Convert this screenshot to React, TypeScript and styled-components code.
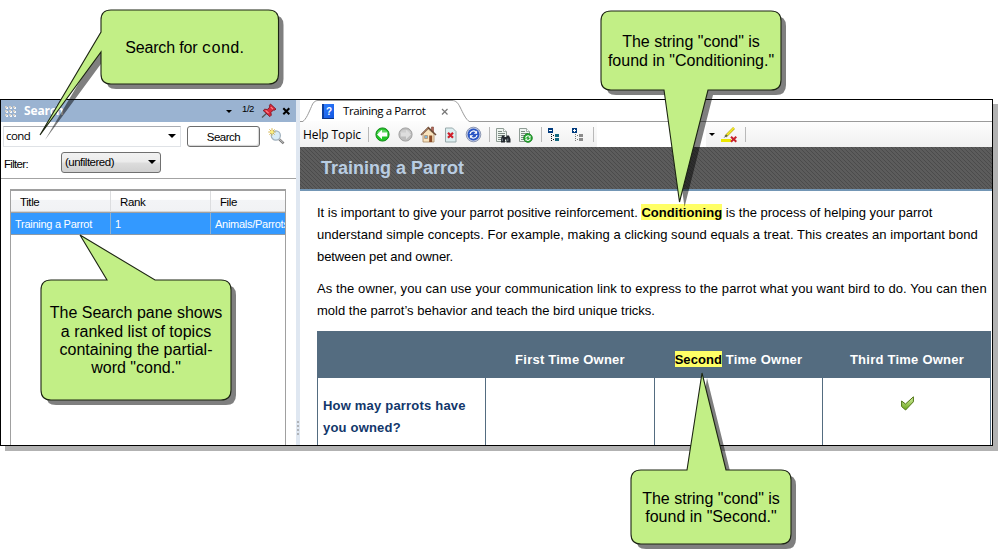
import React from "react";
import styled, { createGlobalStyle } from "styled-components";

const GlobalStyle = createGlobalStyle`
  *, *::before, *::after { box-sizing: border-box; }
  body { margin: 0; background: #fff; overflow: hidden; }
`;

const SANS = `"Liberation Sans", Arial, sans-serif`;
const UI = `"Open Sans", "Noto Sans", sans-serif`;

const Page = styled.main`
  position: relative;
  width: 998px;
  height: 559px;
  padding-top: 99px;
  overflow: hidden;
  background: #fff;
  font-family: ${SANS};
  color: #000;
`;

const AppWindow = styled.div`
  display: grid;
  grid-template-columns: 295px 4px 1fr;
  width: 993px;
  height: 347px;
  border: 1px solid #000;
  background: #fff;
  box-shadow: 5px 5px 0 #b2b2b2;
`;

/* ---------- Search pane ---------- */

const SearchPane = styled.section`
  display: flex;
  flex-direction: column;
  min-width: 0;
  overflow: hidden;
  font-size: 11px;
  letter-spacing: -0.27px;
`;

const PaneHeader = styled.header`
  display: flex;
  align-items: center;
  flex: none;
  height: 22px;
  padding: 0 5px 0 4px;
  background: #9ab3d1;
`;

const PaneTitle = styled.h2`
  flex: 1;
  margin: 0 0 0 8px;
  font: bold 12px/22px ${UI};
  letter-spacing: -0.15px;
  color: #fff;
`;

const HeaderTools = styled.div`
  display: flex;
  align-items: center;
`;

const SearchRow = styled.div`
  display: flex;
  align-items: center;
  flex: none;
  height: 29px;
  padding: 0 10px 0 2px;
`;

const QueryBox = styled.div`
  display: flex;
  align-items: center;
  justify-content: space-between;
  width: 178px;
  height: 21px;
  padding: 0 4px 2px 2px;
  border: 1px solid #dfe2e6;
  border-top-color: #a9acb2;
  font: 11.5px/18px ${UI};
  letter-spacing: -0.6px;
`;

const SearchButton = styled.button`
  width: 73px;
  height: 21px;
  margin: 0 8px 0 6px;
  padding: 0;
  border: 1px solid #6d6d6d;
  border-radius: 3px;
  background: #fff;
  box-shadow: inset -1px -1px 1px #d4d4d4;
  font: 11.5px/18px ${SANS};
  letter-spacing: -0.5px;
  color: #000;
`;

const FilterRow = styled.div`
  display: flex;
  align-items: center;
  flex: none;
  height: 28px;
  padding: 0 0 5px 3px;
  border-bottom: 1px solid #a3a3a3;
`;

const FilterLabel = styled.label`
  width: 57px;
  padding-top: 3px;
  font-size: 11.5px;
  letter-spacing: -0.68px;
`;

const FilterSelect = styled.div`
  display: flex;
  align-items: center;
  justify-content: space-between;
  width: 100px;
  height: 21px;
  padding: 0 4px 0 3px;
  border: 1px solid #707070;
  border-radius: 3px;
  background: linear-gradient(#f2f2f2, #ebebeb 48%, #dddddd 52%, #d0d0d0);
  font-size: 11.5px;
  letter-spacing: -0.5px;
`;

const ResultList = styled.div`
  flex: 1;
  width: 276px;
  margin: 10px 0 0 9px;
  border: 1px solid #a0a0a0;
  border-bottom: 0;
  border-top-width: 2px;
  overflow: hidden;
`;

const ResultRow = styled.div<{ $head?: boolean }>`
  display: grid;
  grid-template-columns: 100px 100px 74px;
  height: 22px;
  background: ${(p) => (p.$head ? "linear-gradient(#fff 40%, #f3f4f6 44%, #f1f2f4)" : "#3399ff")};
  color: ${(p) => (p.$head ? "#000" : "#fff")};
  border-bottom: 1px solid ${(p) => (p.$head ? "#a0a0a0" : "#8c9aa8")};
  box-shadow: ${(p) => (p.$head ? "inset 0 -1px 0 #d5d5d5" : "none")};
`;

const ResultCell = styled.span<{ $head?: boolean }>`
  padding-left: ${(p) => (p.$head ? 9 : 4)}px;
  font-size: ${(p) => (p.$head ? 11.5 : 11)}px;
  letter-spacing: ${(p) => (p.$head ? -0.4 : -0.27)}px;
  line-height: 22px;
  white-space: nowrap;
  overflow: hidden;
  border-right: ${(p) => (p.$head ? "1px solid #dcdddf" : "1px solid #8fb0d0")};
  &:last-child { border-right: 0; }
`;

/* ---------- Splitter ---------- */

const Splitter = styled.div`
  display: flex;
  flex-direction: column;
  justify-content: flex-end;
  align-items: center;
  gap: 2px;
  padding-bottom: 10px;
  background: #dfe7f1;
`;

const SplitterDot = styled.i`
  width: 2px;
  height: 2px;
  background: #b0b3b8;
`;

/* ---------- Topic pane ---------- */

const TopicPane = styled.section`
  display: flex;
  flex-direction: column;
  min-width: 0;
  overflow: hidden;
`;

const TabStrip = styled.div`
  display: flex;
  flex: none;
  height: 22px;
  background: linear-gradient(#9a9a9a, #9a9a9a) 0 21px / 100% 1px no-repeat;
`;

const Tab = styled.div`
  position: relative;
  display: flex;
  align-items: center;
  width: 172px;
  height: 22px;
  padding-left: 21px;
  font: 11.5px/20px ${UI};
`;

const TabShape = styled.svg`
  position: absolute;
  inset: 0;
`;

const TabLabel = styled.span`
  position: relative;
  width: 101px;
  margin-left: 9px;
  letter-spacing: -0.43px;
  white-space: nowrap;
`;

const Toolbar = styled.div`
  display: flex;
  align-items: center;
  flex: none;
  height: 25px;
  background: linear-gradient(#fdfdfd, #f0f0f0);
`;

const ToolbarLabel = styled.span`
  width: 65px;
  padding-left: 3px;
  font: 12px/24px ${UI};
  letter-spacing: -0.1px;
  white-space: nowrap;
`;

const ToolSlot = styled.span<{ $w: number }>`
  display: flex;
  flex: none;
  justify-content: center;
  width: ${(p) => p.$w}px;
`;

const ToolSeparator = styled.i`
  flex: none;
  width: 1px;
  height: 15px;
  background: #b9b9b9;
`;

const ToolCombo = styled.div`
  flex: none;
  width: 109px;
  height: 25px;
  margin-left: 3px;
  background: #fff;
`;

const Banner = styled.h1`
  flex: none;
  height: 44px;
  margin: 0;
  padding-left: 21px;
  border-bottom: 2px solid #7396b5;
  background: repeating-linear-gradient(45deg, #4b4b4b 0 1px, #5c5c5c 1px 2.83px);
  font: bold 18px/42px ${SANS};
  color: #b9cde2;
`;

const Article = styled.article`
  flex: 1;
  padding: 11px 0 0 17px;
  min-height: 0;
  overflow: hidden;
  font-size: 13px;
  line-height: 22px;
`;

const Paragraph = styled.p`
  margin: 0 0 10px;
`;

const Line = styled.span<{ $ls?: number }>`
  display: block;
  white-space: nowrap;
  letter-spacing: ${(p) => p.$ls ?? 0}px;
`;

const Hit = styled.mark`
  padding: 1px 0 0;
  background: #ffff66;
  color: #000;
  font-weight: bold;
  letter-spacing: 0.05px;
`;

const OwnersTable = styled.div`
  display: grid;
  grid-template-columns: 168px 169px 168px 169px;
  width: 674px;
  margin-top: -1px;
  border-right: 1px solid #546c80;
`;

const HeadCell = styled.div`
  height: 47px;
  padding: 18px 0 0 1px;
  background: #546c80;
  color: #fff;
  font-weight: bold;
  letter-spacing: 0.24px;
  text-align: center;
  white-space: nowrap;
`;

const BodyCell = styled.div`
  height: 90px;
  padding: 17px 0 0 5px;
  border-left: 1px solid #546c80;
  color: #12376b;
  font-weight: bold;
`;

const CheckSlot = styled.div`
  display: flex;
  justify-content: center;
  padding: 1px 5px 0 0;
`;

/* ---------- Callouts floating over the window ---------- */

const CalloutLayer = styled.svg`
  position: absolute;
  inset: 0;
`;

const CalloutText = styled.div<{ $x: number; $y: number; $w: number; $h: number }>`
  position: absolute;
  left: ${(p) => p.$x}px;
  top: ${(p) => p.$y}px;
  width: ${(p) => p.$w}px;
  height: ${(p) => p.$h}px;
  display: flex;
  flex-direction: column;
  align-items: center;
  justify-content: center;
  font: 16px/18.4px ${SANS};
  white-space: nowrap;
`;

const Code = styled.code`
  font: 16px "Liberation Mono", monospace;
`;

type Tail = { from: [number, number]; tip: [number, number]; to: [number, number]; side: "left" | "top" | "bottom" };

function calloutPath(x: number, y: number, w: number, h: number, tail?: Tail) {
  const r = 10;
  const seg = (side: Tail["side"]) =>
    tail && tail.side === side ? `L${tail.from.join(" ")} L${tail.tip.join(" ")} L${tail.to.join(" ")} ` : "";
  return (
    `M${x + r} ${y} ${seg("top")}H${x + w - r} Q${x + w} ${y} ${x + w} ${y + r} ` +
    `V${y + h - r} Q${x + w} ${y + h} ${x + w - r} ${y + h} ${seg("bottom")}` +
    `H${x + r} Q${x} ${y + h} ${x} ${y + h - r} ${seg("left")}V${y + r} Q${x} ${y} ${x + r} ${y}Z`
  );
}

type CalloutProps = { x: number; y: number; w: number; h: number; tail: Tail; flatShadow?: boolean };

function Callout({ x, y, w, h, tail, flatShadow }: CalloutProps) {
  const shape = calloutPath(x, y, w, h, tail);
  return (
    <g>
      <path d={flatShadow ? calloutPath(x, y, w, h) : shape} transform="translate(5 5)" fill="#000" fillOpacity=".5" />
      <path d={shape} fill="#c2ef86" stroke="#1c2412" strokeWidth="1.1" />
    </g>
  );
}

/* ---------- Icons ---------- */

const Caret = ({ small }: { small?: boolean }) =>
  small ? (
    <svg width="6" height="3" viewBox="0 0 6 3"><path d="M0 0h6L3 3z" fill="#000" /></svg>
  ) : (
    <svg width="8" height="4" viewBox="0 0 8 4"><path d="M0 0h8L4 4z" fill="#000" /></svg>
  );

const Grip = () => (
  <svg width="11" height="11" viewBox="0 0 11 11">
    {[0, 4, 8].map((y) => [0, 4, 8].map((x) => (
      <g key={`${x}-${y}`}><rect x={x + 1} y={y + 1} width="2" height="2" fill="#f6f8fb" /><rect x={x} y={y} width="2" height="2" fill="#d3cfc8" /></g>
    )))}
  </svg>
);

const Half = styled.span`
  width: 13px;
  margin: -4px 6px 0 10px;
  font: 9.5px/12px ${SANS};
  letter-spacing: -0.4px;
  white-space: nowrap;
`;

const PinIcon = () => (
  <svg width="16" height="16" viewBox="0 0 16 16">
    <path d="M6 10 1 14.5" stroke="#555" strokeWidth="1.3" />
    <path d="M9.5 1 15 6.200l-1.600 1-1-.2-2.500 2.500.4 2.700-1.400 1.400L2.200 7.600l1.500-1.400 2.700.3 2.400-2.400-.4-1.600z" fill="#d8283a" stroke="#7d1523" strokeWidth=".9" />
    <path d="m9.8 4.1 2.2 2M4.6 7.400l3 2.800" stroke="#ff8c91" strokeWidth="1.1" />
  </svg>
);

const CloseIcon = () => (
  <svg width="9" height="9" viewBox="0 0 9 9"><path d="M1.3 1.3l6 6m0-6l-6 6" stroke="#000" strokeWidth="2" /></svg>
);

const MagnifierIcon = () => (
  <svg width="17" height="17" viewBox="0 0 17 17">
    <path d="m10.8 10.8 4.8 4.6" stroke="#777" strokeWidth="2.4" />
    <path d="m11 10.8 4.2 4" stroke="#ccc" strokeWidth="1" />
    <circle cx="7.8" cy="7.5" r="4.6" fill="#d8ecf7" stroke="#9fb0bd" strokeWidth="1.2" />
    <path d="M4 .2v7.4M.3 4h7.4M1.4 1.4l5.2 5.2M6.6 1.4 1.4 6.6" stroke="#c9a11e" strokeWidth=".8" />
    <circle cx="4" cy="4" r="1.6" fill="#fff27a" />
  </svg>
);

const BookIcon = styled.span`
  position: relative;
  display: grid;
  place-items: center;
  width: 12px;
  height: 15px;
  margin-left: 1px;
  border-left: 2px solid #0d3f9e;
  border-bottom: 1px solid #0b3484;
  background: linear-gradient(135deg, #2f7dff, #1257e0);
  color: #fff;
  font: bold 10px/15px ${SANS};
`;

const ArrowBall = ({ forward }: { forward?: boolean }) => (
  <svg width="15" height="15" viewBox="0 0 15 15">
    <g transform={forward ? "translate(15 0) scale(-1 1)" : undefined}>
      <circle cx="7.5" cy="7.5" r="6.6" fill={forward ? "#bdbdbd" : "#1fc424"} stroke={forward ? "#a2a2a2" : "#148a1b"} />
      <path d="M2 6a5.8 4.8 0 0 1 11 0z" fill="#fff" fillOpacity=".28" />
      <path d="M2 7.5 7 2.8v2.7h5.3v4H7v2.7z" fill={forward ? "#dedede" : "#fff"} />
    </g>
  </svg>
);

const HomeIcon = () => (
  <svg width="17" height="17" viewBox="0 0 17 17">
    <path d="M11.5 1h2v5h-2z" fill="#b5655a" stroke="#7d4a3b" strokeWidth=".6" />
    <path d="M3 8 8.3 3 14 8v8H3z" fill="#f8e3bd" stroke="#a58763" strokeWidth=".8" />
    <path d="M1 9 8.3 1.6 16 9" fill="none" stroke="#6b4a36" strokeWidth="1.5" />
    <path d="M1.6 8.4 8.3 1.8" stroke="#c08f6c" strokeWidth=".7" />
    <path d="M9.2 9.5h3V16h-3z" fill="#8a4a26" />
    <path d="M4.6 9.5h2.9v3H4.6z" fill="#7db6de" stroke="#a87c55" strokeWidth=".6" />
  </svg>
);

const PageBase = () => (
  <>
    <path d="M1.5 1.5h7l3 3v10h-10z" fill="#eef5f0" stroke="#8f9c95" />
    <path d="M8.5 1.5v3h3" fill="#fff" stroke="#8f9c95" strokeWidth=".8" />
    <path d="M3 4.5h4M3 6.5h7M3 8.5h7M3 10.5h5M3 12.5h4" stroke="#7c8b83" />
  </>
);

const StopPageIcon = () => (
  <svg width="13" height="16" viewBox="0 0 13 16">
    <path d="M1.5 1h7L12 4.5V15H1.5z" fill="#dceef0" stroke="#98a9ab" />
    <path d="m4 5.8 5 5m0-5-5 5" stroke="#d0202c" strokeWidth="2.2" />
  </svg>
);

const RefreshIcon = () => (
  <svg width="17" height="17" viewBox="0 0 17 17">
    <circle cx="8.5" cy="8.5" r="7.3" fill="#bfc8e0" stroke="#8d98b4" />
    <circle cx="8.5" cy="8.5" r="5.9" fill="#2955c4" />
    <path d="M5 8a3.6 3.4 0 0 1 5.8-2.3M12 9a3.6 3.4 0 0 1-5.8 2.3" fill="none" stroke="#fff" strokeWidth="1.2" />
    <path d="M12.1 4.4v3.4H8.7zM4.9 12.6V9.2h3.4z" fill="#fff" />
  </svg>
);

const FindPageIcon = () => (
  <svg width="16" height="16" viewBox="0 0 16 16">
    <PageBase />
    <path d="M7 8.5h2.5V10h2V8.5H14l1.5 3.5v3.5h-4v-3H10v3H6V12z" fill="#252a30" />
    <path d="M7.3 11.5V14M12.8 11.5V14" stroke="#7b8691" />
  </svg>
);

const SyncPageIcon = () => (
  <svg width="15" height="16" viewBox="0 0 15 16">
    <PageBase />
    <circle cx="10" cy="11" r="4.4" fill="#21a52c" stroke="#14791d" strokeWidth=".7" />
    <path d="M7.7 10.8a2.3 2.3 0 0 1 4-1.2M12.3 11.4a2.3 2.3 0 0 1-4 1.2" fill="none" stroke="#fff" strokeWidth="1.1" />
    <path d="M12.6 8.4v2.3h-2.3zM7.4 13.7v-2.3h2.3z" fill="#fff" />
  </svg>
);

const TreeIcon = ({ expand }: { expand?: boolean }) => {
  const block = expand ? "#8a8a8a" : "#13687f";
  return (
    <svg width="12" height="14" viewBox="0 0 12 14" shapeRendering="crispEdges">
      <rect width="5" height="5" fill="#003a7d" />
      <path d="M1 2.5h3" stroke="#fff" />
      {expand && <path d="M2.5 1v3" stroke="#fff" />}
      <path d="M3.5 6v7M5 7.5h2M5 11.5h2" stroke={expand ? "#777" : "#111"} strokeDasharray="1 1" />
      <rect x="7" y="6" width="4" height="3" fill={block} />
      <rect x="7" y="10" width="4" height="3" fill={block} />
    </svg>
  );
};

const HighlighterIcon = () => (
  <svg width="17" height="16" viewBox="0 0 17 16">
    <path d="M0 12h10v3H0z" fill="#ece800" />
    <path d="M4.5 9.5 13 1" stroke="#b6a61a" strokeWidth="2.6" />
    <path d="m5.5 8.5 7.5-7.7" stroke="#f5ed28" strokeWidth="1.6" />
    <path d="m2.5 11 2.8-3.5 1.5 1.3z" fill="#4f5964" />
    <path d="m10 9.7 5.3 5m0-5-5.3 5" stroke="#c8222c" strokeWidth="2" />
  </svg>
);

const CheckIcon = () => (
  <svg width="13" height="15" viewBox="0 0 13 15">
    <defs>
      <linearGradient id="leaf" x1="0" y1="0" x2="0" y2="1"><stop stopColor="#d7f3a4" /><stop offset="1" stopColor="#6ba51a" /></linearGradient>
    </defs>
    <path d="M.6 5 4.5 8 12.4.8v5L4.6 14l-4-3.5z" fill="url(#leaf)" stroke="#4f7315" />
  </svg>
);

const TAB_OUTLINE = "M2.5 21.5C6 20 9 12 11.5 6.5 13 2.5 15 .5 18 .5H152c4 0 6 2.5 8 6.5 3 6 6 13 9.5 14.5";

export default function App() {
  return (
    <>
      <GlobalStyle />
      <Page>
        <AppWindow>
          <SearchPane>
            <PaneHeader>
              <Grip />
              <PaneTitle>Search</PaneTitle>
              <HeaderTools>
                <Caret small />
                <Half>1/2</Half>
                <PinIcon />
                <ToolSlot $w={5} />
                <CloseIcon />
              </HeaderTools>
            </PaneHeader>
            <SearchRow>
              <QueryBox>cond<Caret /></QueryBox>
              <SearchButton>Search</SearchButton>
              <MagnifierIcon />
            </SearchRow>
            <FilterRow>
              <FilterLabel>Filter:</FilterLabel>
              <FilterSelect>(unfiltered)<Caret /></FilterSelect>
            </FilterRow>
            <ResultList>
              <ResultRow $head>
                <ResultCell $head>Title</ResultCell>
                <ResultCell $head>Rank</ResultCell>
                <ResultCell $head>File</ResultCell>
              </ResultRow>
              <ResultRow>
                <ResultCell>Training a Parrot</ResultCell>
                <ResultCell>1</ResultCell>
                <ResultCell>Animals/Parrots</ResultCell>
              </ResultRow>
            </ResultList>
          </SearchPane>

          <Splitter>
            {[0, 1, 2, 3].map((i) => <SplitterDot key={i} />)}
          </Splitter>

          <TopicPane>
            <TabStrip>
              <Tab>
                <TabShape width="172" height="22" viewBox="0 0 172 22">
                  <path d={TAB_OUTLINE} fill="#fff" stroke="#999" />
                  <path d="M3.5 21.5h165" stroke="#fdfdfd" />
                </TabShape>
                <BookIcon>?</BookIcon>
                <TabLabel>Training a Parrot</TabLabel>
                <TabShape width="172" height="22" viewBox="0 0 172 22">
                  <path d="m142 9 5.5 5.5m0-5.5L142 14.5" stroke="#777" strokeWidth="1.2" />
                </TabShape>
              </Tab>
            </TabStrip>
            <Toolbar>
              <ToolbarLabel>Help Topic</ToolbarLabel>
              <ToolSlot $w={3} />
              <ToolSeparator />
              <ToolSlot $w={26}><ArrowBall /></ToolSlot>
              <ToolSlot $w={20}><ArrowBall forward /></ToolSlot>
              <ToolSlot $w={26}><HomeIcon /></ToolSlot>
              <ToolSlot $w={19}><StopPageIcon /></ToolSlot>
              <ToolSlot $w={27}><RefreshIcon /></ToolSlot>
              <ToolSlot $w={2} />
              <ToolSeparator />
              <ToolSlot $w={26}><FindPageIcon /></ToolSlot>
              <ToolSlot $w={19}><SyncPageIcon /></ToolSlot>
              <ToolSlot $w={6} />
              <ToolSeparator />
              <ToolSlot $w={24}><TreeIcon /></ToolSlot>
              <ToolSlot $w={23}><TreeIcon expand /></ToolSlot>
              <ToolSlot $w={4} />
              <ToolSeparator />
              <ToolCombo />
              <ToolSlot $w={12}><Caret small /></ToolSlot>
              <ToolSlot $w={23}><HighlighterIcon /></ToolSlot>
              <ToolSlot $w={4} />
              <ToolSeparator />
            </Toolbar>
            <Banner>Training a Parrot</Banner>
            <Article>
              <Paragraph>
                <Line>It is important to give your parrot positive reinforcement. <Hit>Conditioning</Hit> is the process of helping your parrot</Line>
                <Line $ls={0.05}>understand simple concepts. For example, making a clicking sound equals a treat. This creates an important bond</Line>
                <Line $ls={-0.09}>between pet and owner.</Line>
              </Paragraph>
              <Paragraph>
                <Line $ls={0.088}>As the owner, you can use your communication link to express to the parrot what you want bird to do. You can then</Line>
                <Line>mold the parrot’s behavior and teach the bird unique tricks.</Line>
              </Paragraph>
              <OwnersTable>
                <HeadCell />
                <HeadCell>First Time Owner</HeadCell>
                <HeadCell><Hit>Second</Hit> Time Owner</HeadCell>
                <HeadCell>Third Time Owner</HeadCell>
                <BodyCell>
                  <Line $ls={0.2}>How may parrots have</Line>
                  <Line $ls={0.2}>you owned?</Line>
                </BodyCell>
                <BodyCell />
                <BodyCell />
                <BodyCell><CheckSlot><CheckIcon /></CheckSlot></BodyCell>
              </OwnersTable>
            </Article>
          </TopicPane>
        </AppWindow>

        <CalloutLayer width="998" height="559" viewBox="0 0 998 559">
          <Callout x={101} y={10} w={177.5} h={74} tail={{ side: "left", from: [101, 52], tip: [40, 135], to: [101, 32] }} />
          <Callout x={601} y={11} w={180} h={79} tail={{ side: "bottom", from: [708, 90], tip: [679.5, 202], to: [664, 90] }} />
          <Callout x={41} y={280} w={190} h={120} flatShadow tail={{ side: "top", from: [107, 280], tip: [80, 235], to: [155, 280] }} />
          <Callout x={631} y={470} w={160} h={74} tail={{ side: "top", from: [687, 470], tip: [702, 373], to: [726, 470] }} />
        </CalloutLayer>
        <CalloutText $x={96} $y={10} $w={177} $h={76}>
          <Line $ls={-0.15}>Search for <Code>cond</Code>.</Line>
        </CalloutText>
        <CalloutText $x={601} $y={12} $w={180} $h={79}>
          <Line>The string "cond" is</Line>
          <Line>found in "Conditioning."</Line>
        </CalloutText>
        <CalloutText $x={41} $y={281} $w={190} $h={120}>
          <Line>The Search pane shows</Line>
          <Line>a ranked list of topics</Line>
          <Line>containing the partial-</Line>
          <Line>word "cond."</Line>
        </CalloutText>
        <CalloutText $x={631} $y={470} $w={160} $h={76}>
          <Line>The string "cond" is</Line>
          <Line>found in "Second."</Line>
        </CalloutText>
      </Page>
    </>
  );
}
